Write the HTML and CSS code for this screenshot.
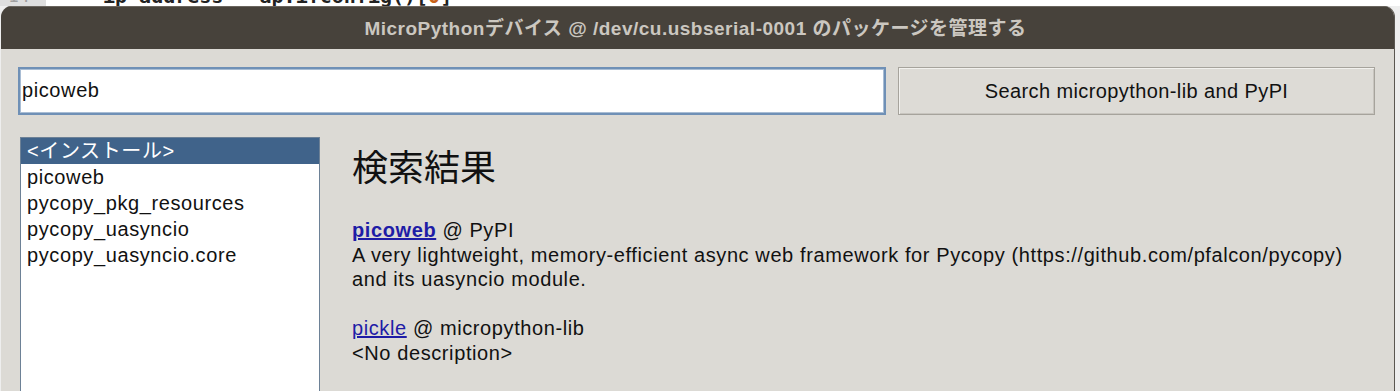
FILE: index.html
```html
<!DOCTYPE html>
<html lang="ja">
<head>
<meta charset="utf-8">
<title>Manage packages</title>
<link rel="stylesheet" href="styles.css">
</head>
<body>
<div class="editor">
  <div class="gutter"><span class="lineno">14</span></div>
  <div class="code">ip_address = ap.ifconfig()[<span class="num">0</span>]</div>
</div>
<div class="dialog">
  <div class="titlebar">MicroPythonデバイス @ /dev/cu.usbserial-0001 のパッケージを管理する</div>
  <div class="content">
    <div class="searchrow">
      <div class="input">picoweb</div>
      <div class="button">Search micropython-lib and PyPI</div>
    </div>
    <div class="main">
      <ul class="listbox">
        <li class="selected">&lt;インストール&gt;</li>
        <li>picoweb</li>
        <li>pycopy_pkg_resources</li>
        <li>pycopy_uasyncio</li>
        <li>pycopy_uasyncio.core</li>
      </ul>
      <div class="results">
        <h1 class="heading">検索結果</h1>
        <p class="result"><a class="link bold">picoweb</a> @ PyPI<br>A very lightweight, memory-efficient async web framework for Pycopy (https://github.com/pfalcon/pycopy)<br>and its uasyncio module.</p>
        <p class="result"><a class="link">pickle</a> @ micropython-lib<br>&lt;No description&gt;</p>
      </div>
    </div>
  </div>
</div>
</body>
</html>
```

FILE: styles.css
```css
html, body {
  margin: 0;
  padding: 0;
  height: 391px;
  overflow: hidden;
  background: #eeeeee;
  font-family: "Liberation Sans", Arial, "Noto Sans CJK JP", sans-serif;
}

.editor {
  height: 6px;
  display: flex;
  overflow: hidden;
  background: #ffffff;
}
.gutter {
  width: 46px;
  background: #dedede;
  overflow: hidden;
}
.lineno {
  display: block;
  margin-top: -14px;
  padding-left: 8px;
  font-family: "DejaVu Sans Mono", monospace;
  font-size: 18px;
  color: #a0a0a0;
  line-height: 20px;
}
.code {
  margin-top: -14px;
  padding-left: 57px;
  font-family: "DejaVu Sans Mono", monospace;
  font-weight: bold;
  font-size: 20px;
  line-height: 20px;
  color: #222;
  white-space: pre;
}
.num { color: #c8621a; }

.dialog {
  margin-left: 1px;
  width: 1393px;
  height: 385px;
  border-radius: 11px 11px 0 0;
  overflow: hidden;
  background: #dcdad5;
  box-shadow: 1px 0 0 #5a5650;
  display: flex;
  flex-direction: column;
}

.titlebar {
  height: 43px;
  flex: none;
  background: #47423b;
  border-top: 1px solid #6a655e;
  box-sizing: border-box;
  color: #cbc7c0;
  font-weight: bold;
  font-size: 19px;
  letter-spacing: 0.5px;
  display: flex;
  align-items: center;
  justify-content: center;
  padding: 0 4px 3px 0;
}

.content {
  padding: 18px 18px 0 17px;
  display: flex;
  flex-direction: column;
  flex: 1;
  min-height: 0;
}

.searchrow {
  display: flex;
  gap: 12px;
  height: 48px;
}
.input {
  width: 868px;
  box-sizing: border-box;
  background: #ffffff;
  border: 2px solid #6f90b6;
  box-shadow: inset 0 0 0 1px #a9bdd4;
  font-size: 20px;
  letter-spacing: 0.6px;
  color: #111;
  padding: 10px 0 0 2px;
}
.button {
  flex: 0 0 477px;
  box-sizing: border-box;
  border: 1px solid #a6a39c;
  box-shadow: inset 1px 1px 0 #f2f1ee, inset -1px -1px 0 #c8c5bf;
  background: #dddbd6;
  font-size: 20px;
  letter-spacing: 0.4px;
  color: #111;
  display: flex;
  align-items: center;
  justify-content: center;
}

.main {
  display: flex;
  margin-top: 22px;
  flex: 1;
  min-height: 0;
}

.listbox {
  list-style: none;
  margin: 0 0 0 2px;
  padding: 0;
  width: 300px;
  box-sizing: border-box;
  background: #ffffff;
  border: 1px solid #6d8196;
  border-bottom: none;
  font-size: 20px;
  letter-spacing: 0.6px;
  color: #111;
}
.listbox li {
  height: 26px;
  line-height: 26px;
  padding-left: 6px;
}
.listbox li.selected {
  background: #40638a;
  color: #ffffff;
}

.results {
  padding-left: 32px;
  color: #111;
}
.heading {
  margin: 6px 0 0 0;
  font-family: "Noto Sans CJK JP", sans-serif;
  font-weight: normal;
  font-size: 36px;
  line-height: 44px;
}
.result {
  margin: 31px 0 0 0;
  font-size: 20px;
  letter-spacing: 0.6px;
  line-height: 24.5px;
}
.result + .result {
  margin-top: 24.5px;
}
.link {
  color: #1e1ca6;
  text-decoration: underline;
}
.bold { font-weight: bold; }
```
